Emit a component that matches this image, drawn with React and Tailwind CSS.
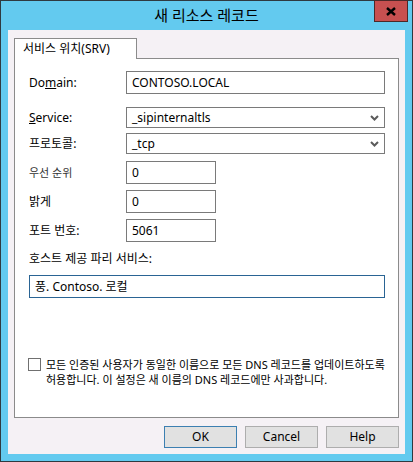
const font = { fontFamily: '"Noto Sans", "Noto Sans CJK KR", sans-serif' };

function Field({ label, children, className = '' }) {
    return (
        <div className={`flex items-center ${className}`}>
            <div className="w-[97px] text-[12px] text-black leading-none">{label}</div>
            {children}
        </div>
    );
}

function TextBox({ value, width = 'w-[259px]', height = 'h-[23px]' }) {
    return (
        <div className={`${width} ${height} border border-[#7a7a7a] bg-white flex items-center pl-[5px] text-[12px] text-black`}>
            {value}
        </div>
    );
}

function Select({ value }) {
    return (
        <div className="w-[259px] h-[21px] border border-[#7a7a7a] bg-white flex items-center justify-between pl-[5px] pr-[5px] text-[12px] text-black">
            <span>{value}</span>
            <svg width="9" height="6" viewBox="0 0 9 6">
                <path d="M1 1 L4.5 4.5 L8 1" fill="none" stroke="#5b5b5b" strokeWidth="2" />
            </svg>
        </div>
    );
}

function Button({ children, primary }) {
    return (
        <button
            className={`w-[73px] h-[22px] bg-[#e1e1e1] border text-[12px] text-black flex items-center justify-center ${primary ? 'border-[#3c7fb1]' : 'border-[#adadad]'}`}
        >
            {children}
        </button>
    );
}

export default function App() {
    return (
        <div style={font} className="relative w-[413px] h-[462px] bg-[#63caef] border border-[#2f3a40] flex flex-col px-[7px] pb-[7px]">
            {/* title bar */}
            <div className="h-[29px] flex items-center justify-center text-[15px] text-black">
                새 리소스 레코드
            </div>
            <div className="absolute top-[-1px] right-[4px] w-[34px] h-[22px] bg-[#c75050] border border-[#4d2828] flex items-center justify-center">
                <svg width="10" height="9" viewBox="0 0 10 9">
                    <path d="M1 1 L9 8 M9 1 L1 8" stroke="#000" strokeWidth="2.4" />
                </svg>
            </div>

            {/* client */}
            <div className="flex-1 bg-[#f5f1f5] flex flex-col px-[6px] pt-[8px]">
                {/* tab header */}
                <div className="relative z-10 w-[123px] h-[21px] bg-white border border-b-0 border-[#8b8b8b] pl-[8px] pt-[1px] text-[12px] text-black">
                    서비스 위치(SRV)
                </div>
                <div className="-mt-px h-[360px] bg-white border border-[#8b8b8b] flex flex-col pl-[14px]">
                    <Field className="mt-[12px]" label={<span>Do<span className="underline">m</span>ain:</span>}>
                        <TextBox value="CONTOSO.LOCAL" />
                    </Field>
                    <Field className="mt-[13px]" label={<span><span className="underline">S</span>ervice:</span>}>
                        <Select value="_sipinternaltls" />
                    </Field>
                    <Field className="mt-[5px]" label="프로토콜:">
                        <Select value="_tcp" />
                    </Field>
                    <Field className="mt-[7px]" label={<span className="text-[11px] text-[#333]">우선 순위</span>}>
                        <TextBox value="0" width="w-[90px]" />
                    </Field>
                    <Field className="mt-[6px]" label="밝게">
                        <TextBox value="0" width="w-[90px]" />
                    </Field>
                    <Field className="mt-[6px]" label="포트 번호:">
                        <TextBox value="5061" width="w-[90px]" />
                    </Field>
                    <div className="mt-[9px] text-[12px] text-black leading-[15px]">호스트 제공 파리 서비스:</div>
                    <div className="mt-[9px] w-[356px] h-[23px] border border-[#2a6494] bg-white flex items-center pl-[5px] text-[12px] text-black">
                        풍. Contoso. 로컬
                    </div>
                    <div className="mt-[59px] flex items-start gap-[5px] -ml-[1px]">
                        <div className="mt-[1px] w-[13px] h-[13px] border border-[#707070] bg-white shrink-0" />
                        <div className="text-[11px] text-black leading-[15px] whitespace-nowrap">
                            모든 인증된 사용자가 동일한 이름으로 모든 DNS 레코드를 업데이트하도록
                            <br />
                            허용합니다. 이 설정은 새 이름의 DNS 레코드에만 사과합니다.
                        </div>
                    </div>
                </div>
                {/* buttons */}
                <div className="mt-[8px] flex justify-end gap-[8px] pr-[0px]">
                    <Button primary>OK</Button>
                    <Button>Cancel</Button>
                    <Button>Help</Button>
                </div>
            </div>
        </div>
    );
}
